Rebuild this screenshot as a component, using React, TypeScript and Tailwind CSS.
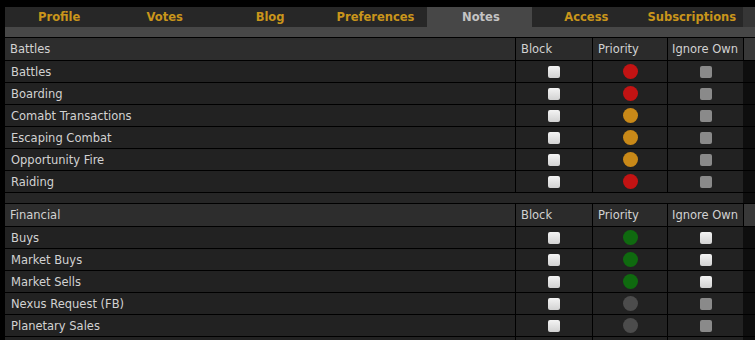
import React from 'react'

type Dot = 'red' | 'orange' | 'green' | 'gray'

interface Row {
  name: string
  priority: Dot
  ignoreOn: boolean
}

const tabs = ['Profile', 'Votes', 'Blog', 'Preferences', 'Notes', 'Access', 'Subscriptions']

const sections: { title: string; rows: Row[] }[] = [
  {
    title: 'Battles',
    rows: [
      { name: 'Battles', priority: 'red', ignoreOn: false },
      { name: 'Boarding', priority: 'red', ignoreOn: false },
      { name: 'Comabt Transactions', priority: 'orange', ignoreOn: false },
      { name: 'Escaping Combat', priority: 'orange', ignoreOn: false },
      { name: 'Opportunity Fire', priority: 'orange', ignoreOn: false },
      { name: 'Raiding', priority: 'red', ignoreOn: false },
    ],
  },
  {
    title: 'Financial',
    rows: [
      { name: 'Buys', priority: 'green', ignoreOn: true },
      { name: 'Market Buys', priority: 'green', ignoreOn: true },
      { name: 'Market Sells', priority: 'green', ignoreOn: true },
      { name: 'Nexus Request (FB)', priority: 'gray', ignoreOn: false },
      { name: 'Planetary Sales', priority: 'gray', ignoreOn: false },
      // next row is only a sliver at the bottom edge
      { name: '', priority: 'gray', ignoreOn: false },
    ],
  },
]

const dotClass: Record<Dot, string> = {
  red: 'bg-[#c21313]',
  orange: 'bg-[#c98918]',
  green: 'bg-[#0f6a0f]',
  gray: 'bg-[#4c4c4c]',
}

function Box({ on }: { on: boolean }) {
  return (
    <span
      className={`block h-[12px] w-[12px] rounded-[2px] ${
        on ? 'bg-gradient-to-b from-[#f4f4f4] to-[#d2d2d2]' : 'bg-[#8a8a8a]'
      }`}
    />
  )
}

function HeaderRow({ title }: { title: string }) {
  return (
    <div className="flex h-[23px] border-b border-black">
      <div className="flex w-[510px] items-center bg-[#2d2d2d] pl-[5px] pt-px">{title}</div>
      <div className="flex w-[77px] items-center border-l border-black bg-[#2b2b2b] pl-[5px] pt-px">Block</div>
      <div className="flex w-[75px] items-center border-l border-black bg-[#2b2b2b] pl-[5px] pt-px">Priority</div>
      <div className="flex w-[76px] items-center border-l border-black bg-[#2b2b2b] pl-[4px] pt-px">Ignore Own</div>
      <div className="flex-1 border-l border-black bg-[#383838]" />
    </div>
  )
}

function DataRow({ row }: { row: Row }) {
  return (
    <div className="flex h-[22px] border-b border-black">
      <div className="flex w-[510px] items-center bg-[#222222] pl-[6px] pt-[2px]">{row.name}</div>
      <div className="flex w-[77px] items-center justify-center border-l border-black bg-[#222222]">
        <Box on />
      </div>
      <div className="flex w-[75px] items-center justify-center border-l border-black bg-[#222222]">
        <span className={`block h-[15px] w-[15px] rounded-full ${dotClass[row.priority]}`} />
      </div>
      <div className="flex w-[76px] items-center justify-center border-l border-black bg-[#222222]">
        <Box on={row.ignoreOn} />
      </div>
      <div className="flex-1 bg-[#0e0e0e]" />
    </div>
  )
}

export default function App() {
  return (
    <div className="h-[340px] w-[755px] overflow-hidden bg-black pt-[7px] font-['DejaVu_Sans',sans-serif] text-[11.5px] text-[#d2d2d2]">
      <div className="ml-[5px] flex h-[20px]">
        <div className="grid w-[738px] grid-cols-7">
          {tabs.map((t) => (
            <div
              key={t}
              className={`flex items-center justify-center pt-[2px] pl-[3px] font-bold ${
                t === 'Notes' ? 'bg-[#474747] text-[#c4c4c4]' : 'bg-[#272727] text-[#c9951b]'
              }`}
            >
              {t}
            </div>
          ))}
        </div>
        <div className="flex-1 bg-[#363636]" />
      </div>
      <div className="ml-[5px] h-[10px] bg-[#474747]" />
      <div className="ml-[5px] border-t border-black">
        {sections.map((s, i) => (
          <div key={s.title}>
            {i > 0 && (
              <div className="flex h-[11px] border-b border-black">
                <div className="w-[738px] bg-[#262626]" />
                <div className="flex-1 bg-[#0e0e0e]" />
              </div>
            )}
            <HeaderRow title={s.title} />
            {s.rows.map((r, j) => (
              <DataRow key={j} row={r} />
            ))}
          </div>
        ))}
      </div>
    </div>
  )
}
